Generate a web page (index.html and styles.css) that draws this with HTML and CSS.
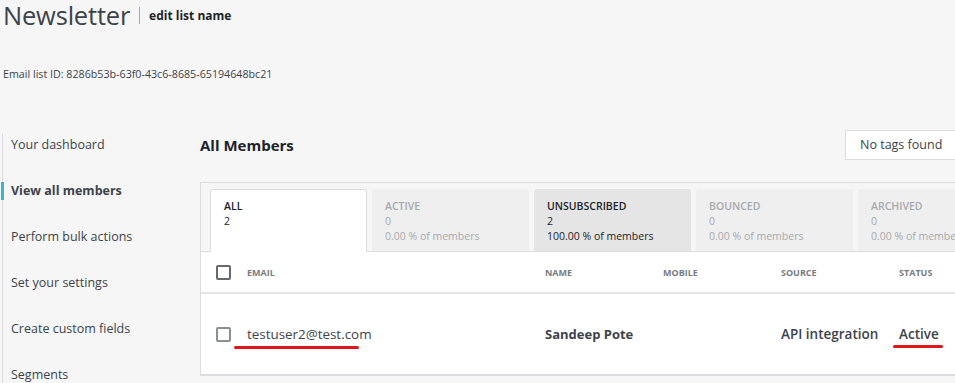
FILE: index.html
```html
<!doctype html>
<html>
<head>
<meta charset="utf-8">
<title>Newsletter - All Members</title>
<link rel="stylesheet" href="styles.css">
</head>
<body>
<div class="page">
  <header class="list-head">
    <h1 class="list-title">Newsletter</h1>
    <span class="divider"></span>
    <a class="edit-link" href="#">edit list name</a>
  </header>
  <p class="list-id">Email list ID: 8286b53b-63f0-43c6-8685-65194648bc21</p>

  <div class="layout">
    <nav class="side-nav">
      <a href="#">Your dashboard</a>
      <a href="#" class="current">View all members</a>
      <a href="#">Perform bulk actions</a>
      <a href="#">Set your settings</a>
      <a href="#">Create custom fields</a>
      <a href="#">Segments</a>
    </nav>

    <main class="members">
      <div class="members-head">
        <h2>All Members</h2>
        <div class="tag-select">No tags found</div>
      </div>

      <div class="panel">
        <div class="tabs">
          <div class="tab selected">
            <strong>ALL</strong>
            <span>2</span>
          </div>
          <div class="tab muted">
            <strong>ACTIVE</strong>
            <span>0</span>
            <span>0.00 % of members</span>
          </div>
          <div class="tab shaded">
            <strong>UNSUBSCRIBED</strong>
            <span>2</span>
            <span>100.00 % of members</span>
          </div>
          <div class="tab muted">
            <strong>BOUNCED</strong>
            <span>0</span>
            <span>0.00 % of members</span>
          </div>
          <div class="tab muted">
            <strong>ARCHIVED</strong>
            <span>0</span>
            <span>0.00 % of members</span>
          </div>
        </div>

        <div class="table">
          <div class="row head-row">
            <span class="check"></span>
            <span>EMAIL</span>
            <span>NAME</span>
            <span>MOBILE</span>
            <span>SOURCE</span>
            <span>STATUS</span>
          </div>
          <div class="row member-row">
            <span class="check"></span>
            <span class="email"><span class="marked mark-email">testuser2@test.com</span></span>
            <span class="strong">Sandeep Pote</span>
            <span></span>
            <span class="semi">API integration</span>
            <span class="semi"><span class="marked mark-status">Active</span></span>
          </div>
        </div>
      </div>
    </main>
  </div>
</div>
</body>
</html>
```

FILE: styles.css
```css
html, body {
  margin: 0;
  padding: 0;
}

body {
  background: #f6f6f6;
  font-family: "Open Sans", "Noto Sans", sans-serif;
  color: #3c434a;
  overflow: hidden;
}

.page {
  width: 1100px;
}

/* header */
.list-head {
  display: flex;
  align-items: center;
  padding: 0 0 0 3px;
  height: 30px;
}
.list-title {
  margin: 0;
  font-size: 25.5px;
  font-weight: 400;
  line-height: 30px;
  color: #3c434a;
  letter-spacing: -0.2px;
}
.divider {
  width: 1px;
  height: 17px;
  margin: 0 9px;
  background: #a7aaad;
}
.edit-link {
  font-size: 12px;
  font-weight: 700;
  color: #1d2327;
  text-decoration: none;
}

.list-id {
  margin: 37px 0 0 3px;
  font-size: 10.7px;
  color: #3c434a;
}

/* layout */
.layout {
  display: grid;
  grid-template-columns: 200px 1fr;
  margin-top: 53px;
}

.side-nav {
  display: flex;
  flex-direction: column;
  margin-left: 2px;
  padding-top: 1px;
  border-left: 1px solid #dcdcde;
}
.side-nav a {
  display: block;
  flex: none;
  margin-left: -2px;
  padding: 0 0 0 7px;
  height: 46px;
  line-height: 20px;
  border-left: 3px solid transparent;
  font-size: 12.5px;
  color: #3c434a;
  text-decoration: none;
}
.side-nav a:last-child {
  height: 30px;
}
.side-nav a.current {
  font-weight: 700;
  position: relative;
}
.side-nav a.current::before {
  content: "";
  position: absolute;
  left: -3px;
  top: 1px;
  width: 3px;
  height: 18px;
  background: #3eb4c9;
}

/* members */
.members-head {
  display: flex;
  align-items: center;
  height: 30px;
  margin-top: -4px;
}
.members-head h2 {
  margin: 0;
  width: 645px;
  font-size: 15px;
  font-weight: 700;
  color: #1d2327;
}
.tag-select {
  width: 130px;
  height: 30px;
  box-sizing: border-box;
  border: 1px solid #dcdcde;
  background: #fff;
  padding: 0 14px;
  font-size: 12.5px;
  line-height: 28px;
  color: #3c434a;
}

.panel {
  margin-top: 22px;
  border: 1px solid #dcdcde;
  border-bottom: none;
  background: #f6f6f6;
}

.tabs {
  display: flex;
  gap: 5px;
  padding: 6px 9px 0;
}
.tab {
  display: flex;
  flex-direction: column;
  width: 157px;
  height: 62px;
  box-sizing: border-box;
  padding: 10px 13px 0;
  border-radius: 3px 3px 0 0;
  background: #efefef;
  font-size: 10.5px;
  line-height: 15px;
  color: #a7aaad;
}
.tab strong {
  font-weight: 600;
}
.tab.selected {
  background: #fff;
  border: 1px solid #dcdcde;
  border-bottom: none;
  padding: 9px 13px 0;
  height: 63px;
  margin-bottom: -1px;
  color: #1d2327;
  position: relative;
}
.tab.shaded {
  background: #e5e5e5;
  color: #1d2327;
}

.table {
  background: #fff;
  border-top: 1px solid #dcdcde;
  border-bottom: 2px solid #dcdcde;
}
.row {
  display: grid;
  grid-template-columns: 31px 298px 118px 118px 118px 118px;
  align-items: center;
  padding-left: 15px;
}
.head-row {
  height: 40px;
  border-bottom: 2px solid #e6e6e6;
  font-size: 9px;
  font-weight: 700;
  color: #787c82;
}
.member-row {
  height: 80px;
  font-size: 13px;
  color: #3c434a;
}
.email {
  font-size: 13.4px;
}
.check {
  width: 15px;
  height: 15px;
  box-sizing: border-box;
  border: 2px solid #8c8f94;
  border-radius: 2px;
  background: #fff;
}
.head-row .check {
  border-color: #646970;
}
.strong {
  font-weight: 700;
}
.semi {
  font-weight: 600;
  font-size: 13.5px;
}

/* red annotation strokes */
.marked {
  position: relative;
}
.marked::after {
  content: "";
  position: absolute;
  height: 3px;
  border-radius: 2px;
  background: #e3171b;
}
.mark-email::after {
  left: -13px;
  right: 13px;
  bottom: -6px;
}
.mark-status::after {
  left: -6px;
  right: -4px;
  bottom: -5px;
}
```
